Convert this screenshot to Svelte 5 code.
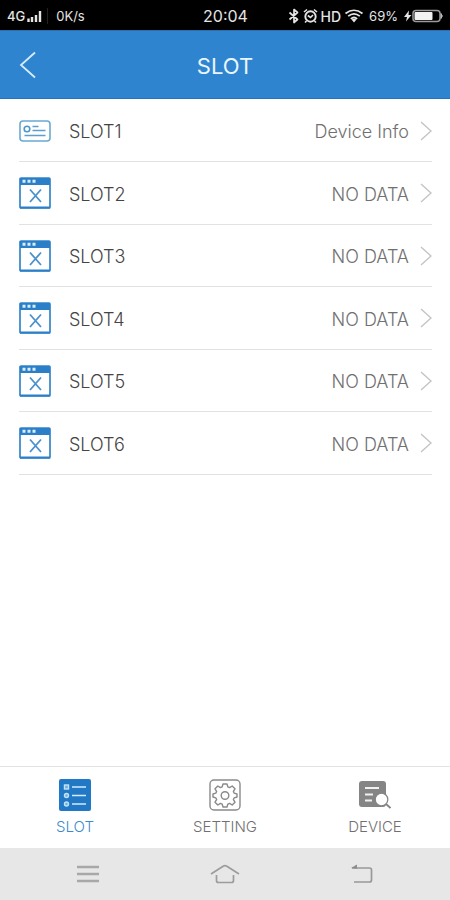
<script lang="ts">
    let slots = [
        { name: 'SLOT1', info: 'Device Info', empty: false },
        { name: 'SLOT2', info: 'NO DATA', empty: true },
        { name: 'SLOT3', info: 'NO DATA', empty: true },
        { name: 'SLOT4', info: 'NO DATA', empty: true },
        { name: 'SLOT5', info: 'NO DATA', empty: true },
        { name: 'SLOT6', info: 'NO DATA', empty: true }
    ];

    let tab = 'SLOT';
</script>

<style>
    :global(body) {
        margin: 0;
        background: #fff;
    }

    .app {
        display: flex;
        flex-direction: column;
        min-height: 100vh;
        font-family: Inter, "Liberation Sans", sans-serif;
        color: #444;
    }

    button {
        padding: 0;
        border: 0;
        background: none;
        font: inherit;
        color: inherit;
        cursor: pointer;
    }

    svg {
        display: block;
        flex: none;
        fill: none;
    }

    .status {
        display: grid;
        grid-template-columns: 1fr auto 1fr;
        align-items: center;
        height: 30px;
        padding: 2px 6px 0 7px;
        box-sizing: border-box;
        background: #000;
        color: #e4e4e4;
        font-size: 13px;
    }

    .status > div {
        display: flex;
        align-items: center;
    }

    .status > div:last-child {
        justify-content: flex-end;
        gap: 3px;
    }

    .network {
        font-weight: 500;
    }

    .speed {
        margin-left: 5px;
        padding-left: 8px;
        border-left: 1px solid #222;
    }

    .time {
        font-size: 16px;
    }

    .hd {
        font-size: 14px;
        font-weight: 500;
    }

    .battery-text {
        padding: 0 3px 0 2px;
    }

    header {
        display: grid;
        grid-template-columns: 56px 1fr 56px;
        align-items: center;
        height: 69px;
        background: #2f84cf;
        border-top: 1px solid #2b6fb0;
        border-bottom: 1px solid #2272c0;
        box-sizing: border-box;
        color: #e9f6ff;
    }

    header button {
        padding: 10px 0 10px 19px;
    }

    h1 {
        margin: 0;
        padding-top: 2px;
        font-size: 22px;
        font-weight: 400;
        text-align: center;
    }

    main {
        flex: 1;
    }

    ul {
        margin: 0;
        padding: 1px 18px 0 19px;
        list-style: none;
    }

    li {
        height: 62px;
        border-bottom: 1px solid #e2e2e2;
        box-sizing: border-box;
    }

    li:nth-child(even) {
        height: 63px;
    }

    li button {
        display: flex;
        align-items: center;
        width: 100%;
        height: 100%;
        font-size: 18px;
        font-weight: 300;
        text-align: left;
    }

    .name {
        flex: 1;
        padding: 2px 0 0 18px;
    }

    .info {
        padding: 2px 11px 0 0;
        color: #707070;
    }

    .tabs {
        display: grid;
        grid-template-columns: repeat(3, 1fr);
        height: 82px;
        border-top: 1px solid #e3e3e3;
        box-sizing: border-box;
    }

    .tabs button {
        display: flex;
        flex-direction: column;
        align-items: center;
        gap: 6px;
        padding-top: 12px;
        font-size: 15px;
        font-weight: 300;
        line-height: 20px;
        color: #707070;
    }

    .tabs button.active {
        color: #3b8acb;
    }

    .system {
        display: grid;
        grid-template-columns: repeat(3, 1fr);
        height: 52px;
        padding: 0 20px;
        background: #e7e7e7;
    }

    .system button {
        display: grid;
        place-items: center;
    }
</style>

<div class="app">
    <div class="status">
        <div>
            <span class="network">4G</span>
            <svg width="17" height="14" viewBox="0 0 17 14">
                <path d="M3.5 13V9.5M7 13V8M11 13V6M15 13V2" stroke="#e4e4e4" stroke-width="2.4" />
            </svg>
            <span class="speed">0K/s</span>
        </div>
        <span class="time">20:04</span>
        <div>
            <svg width="12" height="16" viewBox="0 0 12 16">
                <path d="M1.5 4.5l8 7L6 14.5v-13l3.5 3-8 7" stroke="#e4e4e4" stroke-width="1.7" stroke-linejoin="round" />
            </svg>
            <svg width="15" height="16" viewBox="0 0 15 16">
                <circle cx="7.5" cy="8.5" r="5.2" stroke="#e4e4e4" stroke-width="1.9" />
                <path d="M1 4l3-2.5M14 4l-3-2.5M4.8 7.5l2.7 2L10 7M3.5 13L2 14.5M11.5 13l1.5 1.5" stroke="#e4e4e4" stroke-width="1.6" />
            </svg>
            <span class="hd">HD</span>
            <svg width="20" height="16" viewBox="0 0 20 16">
                <path d="M1.5 5.5Q10-1 18.5 5.5M4.2 8.2Q10 3.6 15.8 8.2M6.8 10.8Q10 8.2 13.2 10.8" stroke="#e4e4e4" stroke-width="1.7" />
                <path d="M7.5 11.5l2.5 3 2.500-3Q10 9.800 7.500 11.500z" fill="#e4e4e4" />
            </svg>
            <span class="battery-text">69%</span>
            <svg width="40" height="16" viewBox="0 0 40 16">
                <path d="M5 2.500L0 9h3L2 13.500 7.500 7h-3z" fill="#e4e4e4" />
                <rect x="9" y="2.5" width="27" height="11" rx="3" stroke="#9b9b9b" stroke-width="1.5" />
                <rect x="10.5" y="4" width="18" height="8" rx="1" fill="#f2f2f2" />
                <path d="M37 5.500q2.500 2.500 0 5z" fill="#bbb" stroke="#bbb" />
            </svg>
        </div>
    </div>

    <header>
        <button aria-label="Back">
            <svg width="18" height="28" viewBox="0 0 18 28">
                <path d="M16 1.5L2 14l14 12.5" stroke="#d5ecfb" stroke-width="1.8" />
            </svg>
        </button>
        <h1>SLOT</h1>
    </header>

    <main>
        <ul>
            {#each slots as slot}
                <li>
                    <button>
                        {#if slot.empty}
                            <svg width="32" height="32" viewBox="0 0 32 32">
                                <rect x="1" y="1" width="30" height="30" rx="1" stroke="#3585c8" stroke-width="1.7" />
                                <path d="M1 1h30v7H1z" fill="#2b7fc8" />
                                <path d="M1 30.5h30" stroke="#2b7fc8" stroke-width="2" />
                                <path d="M3.500 2.800h3v3h-3zM8.500 2.800h3v3h-3zM13.500 2.800h3v3h-3z" fill="#d8edfa" />
                                <path d="M11 12.500L22 25M22 12.500L11 25" stroke="#4a91cc" stroke-width="1.8" />
                            </svg>
                        {:else}
                            <svg width="32" height="22" viewBox="0 0 32 22">
                                <rect x="1" y="1" width="30" height="20" rx="3" stroke="#6aa9d3" stroke-width="1.6" />
                                <circle cx="8" cy="9" r="2.8" stroke="#4f97cb" stroke-width="1.6" />
                                <path d="M13.500 6.500h6M13.500 10.500h13M5.500 15.500h21" stroke="#5c9fcf" stroke-width="1.6" />
                            </svg>
                        {/if}
                        <span class="name">{slot.name}</span>
                        <span class="info">{slot.info}</span>
                        <svg width="12" height="20" viewBox="0 0 12 20">
                            <path d="M1 1l10 9L1 19" stroke="#c4c4c4" stroke-width="1.4" />
                        </svg>
                    </button>
                </li>
            {/each}
        </ul>
    </main>

    <nav class="tabs">
        <button class:active={tab === 'SLOT'} on:click={() => tab = 'SLOT'}>
            <svg width="32" height="32" viewBox="0 0 32 32">
                <rect width="32" height="32" rx="2" fill="#2179c6" />
                <path d="M13 8h14M13 16.500h14M13 25h14" stroke="#d3ebfa" stroke-width="1.7" />
                <g fill="#6fb0df" stroke="#c3e2f6" stroke-width="1.4">
                    <rect x="5.5" y="6" width="4" height="4" />
                    <circle cx="7.5" cy="16.5" r="2" />
                    <circle cx="7.5" cy="25" r="2" />
                </g>
            </svg>
            SLOT
        </button>
        <button class:active={tab === 'SETTING'} on:click={() => tab = 'SETTING'}>
            <svg width="32" height="32" viewBox="0 0 32 32" stroke="#8a8a8a" stroke-width="1.4">
                <rect x="1" y="1" width="30" height="30" rx="4" />
                <path d="M14 5h4l.8 2.800 1.800.8L23.200 7l2.800 2.800-1.600 2.600.8 1.800L28 15v3l-2.800.8-.8 1.800 1.600 2.600-2.800 2.800-2.600-1.600-1.800.8L18 28h-4l-.8-2.800-1.800-.8L8.800 26 6 23.200l1.600-2.600-.8-1.800L4 18v-3l2.800-.8.8-1.800L6 9.800 8.800 7l2.600 1.600 1.800-.8z" stroke-linejoin="round" />
                <circle cx="16" cy="16.5" r="3.8" />
            </svg>
            SETTING
        </button>
        <button class:active={tab === 'DEVICE'} on:click={() => tab = 'DEVICE'}>
            <svg width="32" height="32" viewBox="0 0 32 32">
                <rect y="2" width="27" height="26" rx="3" fill="#858585" />
                <path d="M6 9h14M6 15.500h8M6 21.500h7" stroke="#f1f1f1" stroke-width="2" />
                <path d="M26.500 24.500l5 4.500" stroke="#858585" stroke-width="1.8" />
                <circle cx="22.5" cy="20.5" r="6.3" fill="#fff" stroke="#858585" stroke-width="1.3" />
            </svg>
            DEVICE
        </button>
    </nav>

    <div class="system">
        <button aria-label="Menu">
            <svg width="22" height="20" viewBox="0 0 22 20">
                <path d="M0 3h22M0 10h22M0 17h22" stroke="#a8a8a8" stroke-width="2.4" />
            </svg>
        </button>
        <button aria-label="Home">
            <svg width="30" height="20" viewBox="0 0 30 20" stroke="#9c9c9c" stroke-width="1.7">
                <path d="M1 10L13.500 2q1.500-.8 3 0L29 10M6.500 11v5.500q0 2 2 2h13q2 0 2-2V11" />
            </svg>
        </button>
        <button aria-label="Return">
            <svg width="22" height="20" viewBox="0 0 22 20">
                <path d="M1 4h17.500q2 0 2 2v10q0 2-2 2H3" stroke="#999" stroke-width="1.7" />
                <path d="M0 4l6-3.500V4.800z" fill="#8c8c8c" />
            </svg>
        </button>
    </div>
</div>
